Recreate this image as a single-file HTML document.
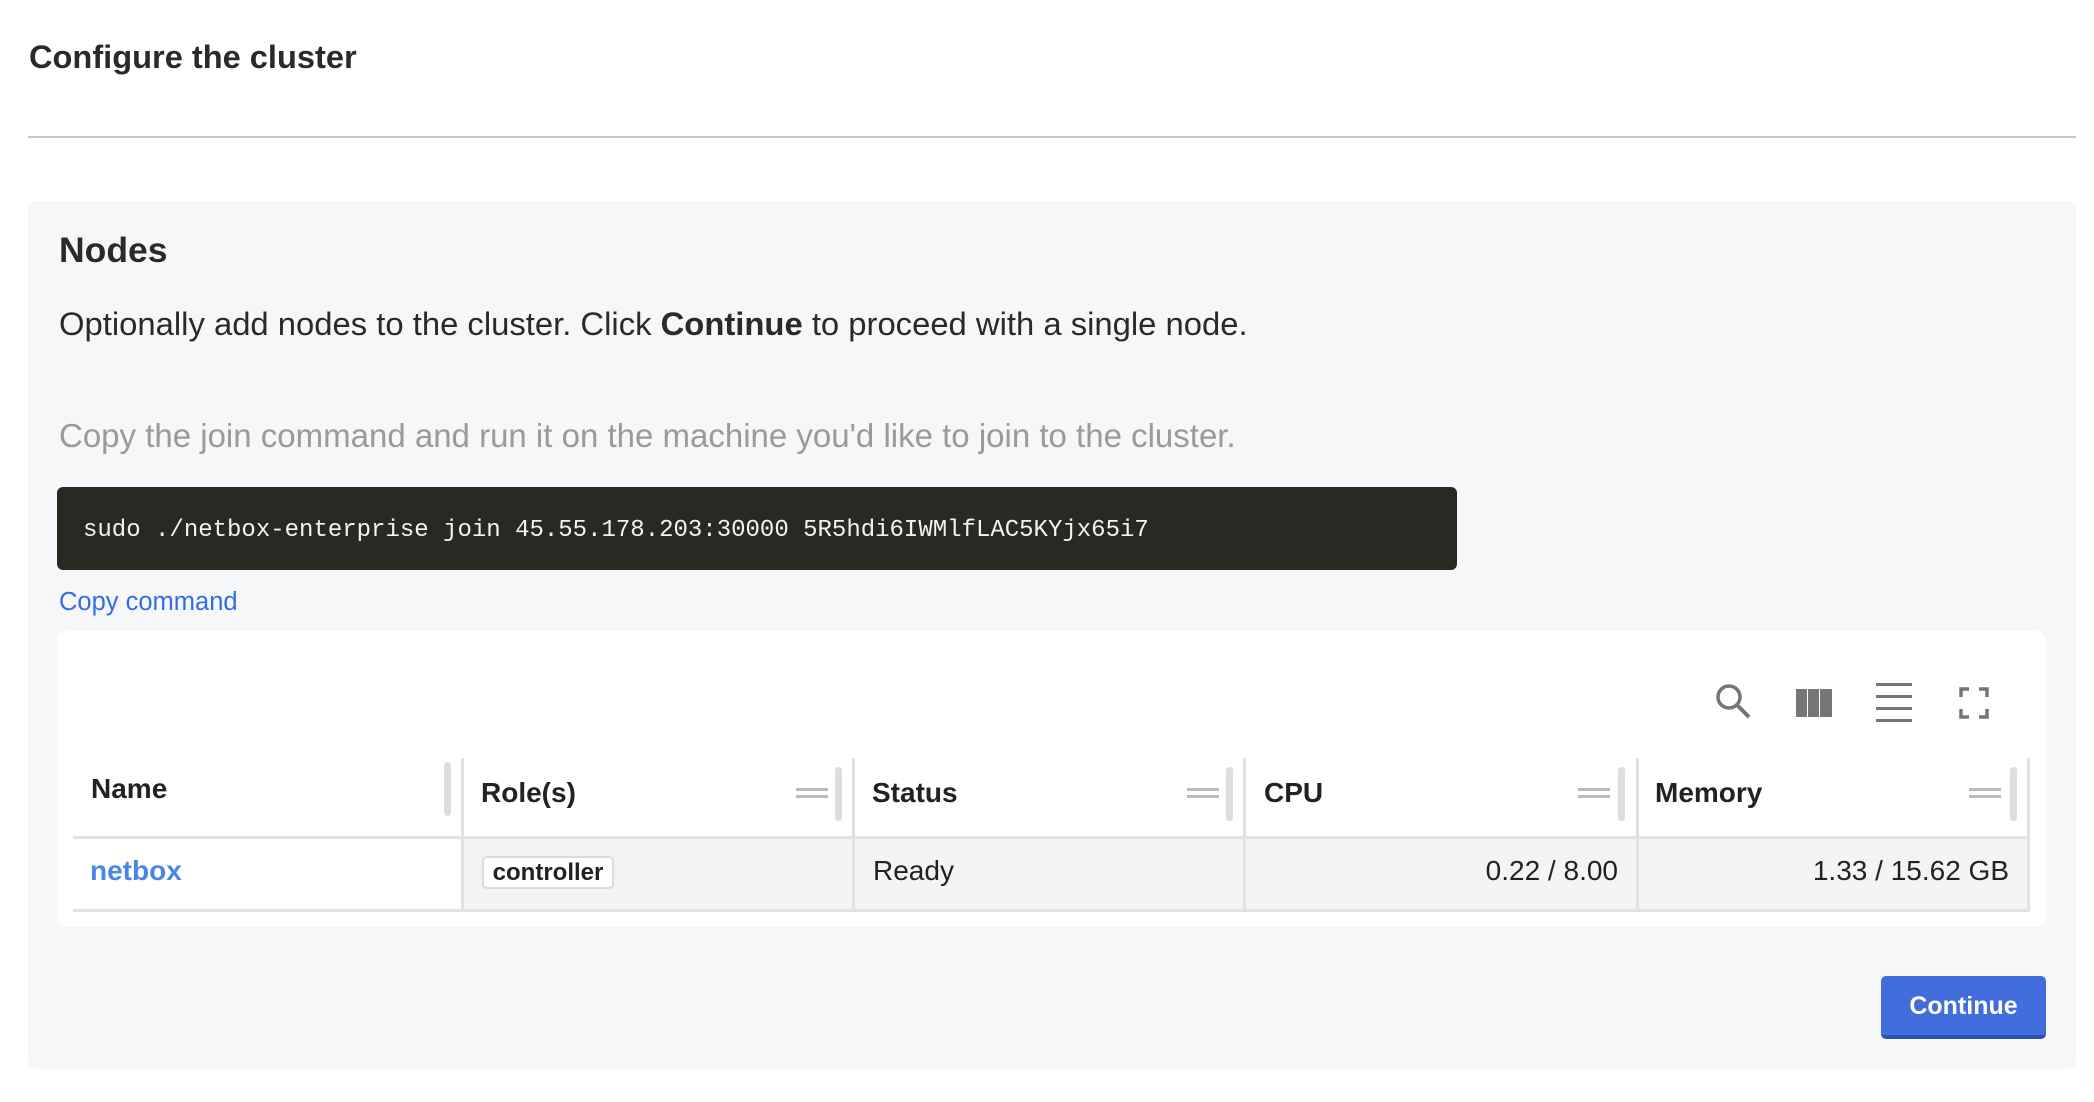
<!DOCTYPE html>
<html><head><meta charset="utf-8"><style>
*{margin:0;padding:0;box-sizing:border-box}
body{width:2094px;height:1102px;background:#fff;font-family:"Liberation Sans",Arial,sans-serif;color:#222;position:relative;overflow:hidden}
.a{position:absolute;white-space:nowrap}
.th{font-weight:bold;font-size:28px;color:#222}
.hd{position:absolute;width:32px;height:10px;border-top:3px solid #bbb;border-bottom:3px solid #bbb}
.rs{position:absolute;width:7px;height:54px;background:#ddd;border-radius:4px}
.vl{position:absolute;width:3px;background:#e2e2e2}
</style></head><body>
<div class="a" style="left:29px;top:38px;font-size:32.6px;font-weight:bold;color:#2a2a2a">Configure the cluster</div>
<div class="a" style="left:28px;top:136px;width:2048px;height:2px;background:#c8c8c8"></div>
<div class="a" style="left:28px;top:201px;width:2048px;height:868px;background:#f6f7f9;border-radius:8px"></div>
<div class="a" style="left:59px;top:230px;font-size:35.5px;font-weight:bold;color:#2a2a2a">Nodes</div>
<div class="a" style="left:59px;top:305px;font-size:32.8px;color:#2a2a2a">Optionally add nodes to the cluster. Click <b>Continue</b> to proceed with a single node.</div>
<div class="a" style="left:59px;top:417px;font-size:33px;color:#9a9a9a">Copy the join command and run it on the machine you'd like to join to the cluster.</div>
<div class="a" style="left:57px;top:487px;width:1400px;height:83px;background:#282923;border-radius:6px"></div>
<div class="a" style="left:83px;top:517px;font-family:'Liberation Mono',monospace;font-size:24px;color:#f2f2f2">sudo ./netbox-enterprise join 45.55.178.203:30000 5R5hdi6IWMlfLAC5KYjx65i7</div>
<div class="a" style="left:59px;top:588px;font-size:25.5px;color:#326de6">Copy command</div>
<div class="a" style="left:57px;top:631px;width:1989px;height:296px;background:#fff;border-radius:10px"></div>
<svg class="a" style="left:1700px;top:670px" width="300" height="60">
<circle cx="29" cy="27" r="11" fill="none" stroke="#757575" stroke-width="3.5"/>
<line x1="37" y1="35" x2="49" y2="47" stroke="#757575" stroke-width="4"/>
<rect x="96" y="19" width="11" height="28" fill="#757575"/><rect x="108" y="19" width="11" height="28" fill="#757575"/><rect x="120" y="19" width="12" height="28" fill="#757575"/>
<rect x="176" y="13" width="36" height="3" fill="#757575"/><rect x="176" y="25" width="36" height="3" fill="#757575"/><rect x="176" y="37" width="36" height="3" fill="#757575"/><rect x="176" y="49" width="36" height="3" fill="#757575"/>
<path d="M261 27v-8h8M279 19h8v8M287 39v8h-8M269 47h-8v-8" fill="none" stroke="#757575" stroke-width="3.5"/>
</svg>
<div class="a" style="left:73px;top:758px;width:1957px;height:79px;background:#fff"></div>
<div class="a" style="left:462px;top:838px;width:1568px;height:72px;background:#f4f4f4"></div>
<div class="a" style="left:73px;top:836px;width:1957px;height:3px;background:#e2e2e2"></div>
<div class="a" style="left:73px;top:909px;width:1957px;height:3px;background:#e2e2e2"></div>
<div class="vl" style="left:461px;top:758px;height:154px"></div>
<div class="vl" style="left:852px;top:758px;height:154px"></div>
<div class="vl" style="left:1243px;top:758px;height:154px"></div>
<div class="vl" style="left:1636px;top:758px;height:154px"></div>
<div class="vl" style="left:2027px;top:758px;height:154px"></div>
<div class="rs" style="left:444px;top:762px"></div>
<div class="rs" style="left:835px;top:767px"></div>
<div class="rs" style="left:1226px;top:767px"></div>
<div class="rs" style="left:1618px;top:767px"></div>
<div class="rs" style="left:2010px;top:767px"></div>
<div class="hd" style="left:796px;top:788px"></div>
<div class="hd" style="left:1187px;top:788px"></div>
<div class="hd" style="left:1578px;top:788px"></div>
<div class="hd" style="left:1969px;top:788px"></div>
<div class="a th" style="left:91px;top:773px">Name</div>
<div class="a th" style="left:481px;top:777px">Role(s)</div>
<div class="a th" style="left:872px;top:777px">Status</div>
<div class="a th" style="left:1264px;top:777px">CPU</div>
<div class="a th" style="left:1655px;top:777px">Memory</div>
<div class="a" style="left:90px;top:855px;font-size:28px;font-weight:bold;color:#4a86e8">netbox</div>
<div class="a" style="left:482px;top:856px;width:132px;height:33px;border:2px solid #ddd;border-radius:5px;background:#fff;font-size:24px;font-weight:bold;text-align:center;line-height:29px">controller</div>
<div class="a" style="left:873px;top:855px;font-size:28px;color:#222">Ready</div>
<div class="a" style="right:476px;top:855px;font-size:28px;color:#222">0.22 / 8.00</div>
<div class="a" style="right:85px;top:855px;font-size:28px;color:#222">1.33 / 15.62 GB</div>
<div class="a" style="left:1881px;top:976px;width:165px;height:63px;background:#416ddd;border-radius:5px;border-bottom:4px solid #2f52b0;color:#fff;font-weight:bold;font-size:25px;text-align:center;line-height:61px">Continue</div>
</body></html>
